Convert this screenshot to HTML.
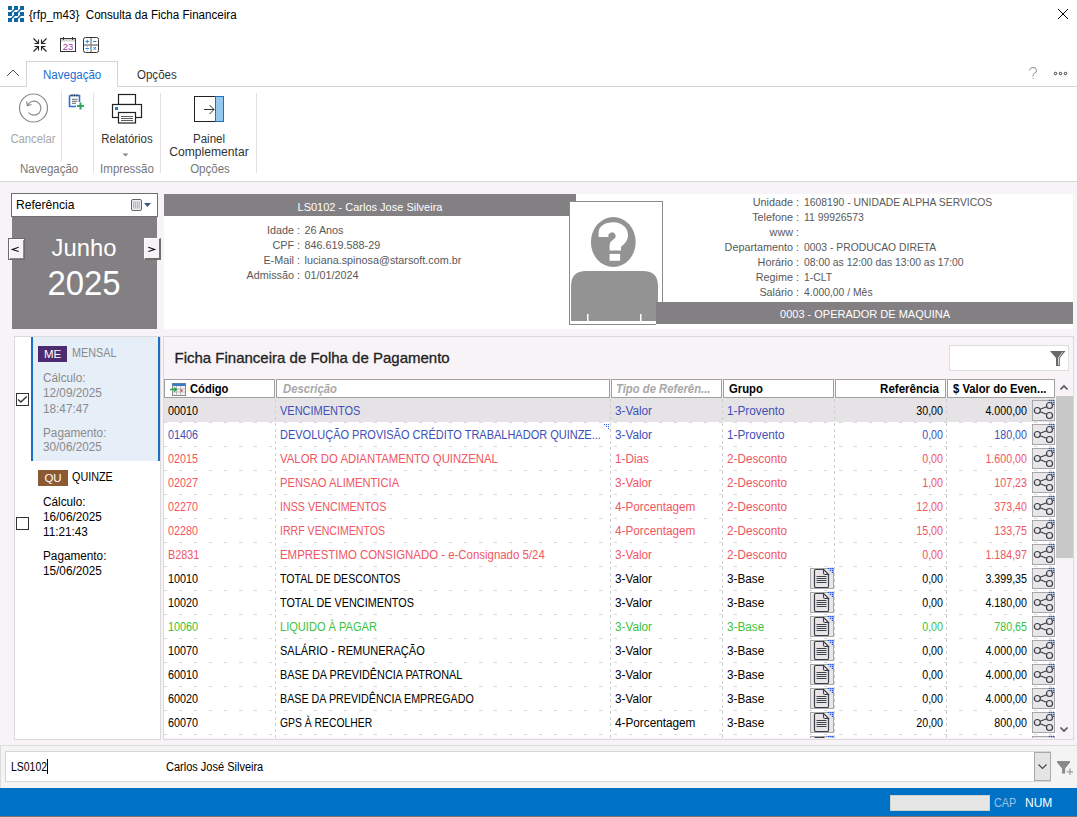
<!DOCTYPE html>
<html><head><meta charset="utf-8"><style>
html,body{margin:0;padding:0;width:1077px;height:817px;overflow:hidden;background:#f7f3f7;position:relative}
body div, body svg{position:absolute}
.t{font-family:"Liberation Sans", sans-serif;white-space:pre}
</style></head><body>
<div style="left:0px;top:0px;width:1077px;height:181px;background:#fff"></div>
<div style="left:0px;top:181px;width:1077px;height:1px;background:#d9d6d9"></div>
<svg style="left:8px;top:6px" width="16" height="16" viewBox="0 0 16 16"><g fill="#0d65a3"><rect x="0" y="0" width="4" height="4"/><rect x="6" y="0" width="4" height="4"/><rect x="12" y="0" width="4" height="4"/><rect x="0" y="6" width="4" height="4"/><rect x="6" y="6" width="4" height="4"/><rect x="12" y="6" width="4" height="4"/><rect x="0" y="12" width="4" height="4"/><rect x="6" y="12" width="4" height="4"/><rect x="12" y="12" width="4" height="4"/></g><path d="M3 7L7 3M9 7L13 3M3 13L7 9M9 13L13 9" stroke="#0d65a3" stroke-width="1.6"/></svg>
<div class="t" style="left:29px;top:6.5px;font-size:12.5px;line-height:16px;color:#000;transform:scaleX(0.928);transform-origin:0 0;">{rfp_m43}&nbsp; Consulta da Ficha Financeira</div>
<svg style="left:1057px;top:8px" width="12" height="12" viewBox="0 0 12 12"><path d="M1 1L11 11M11 1L1 11" stroke="#000" stroke-width="1"/></svg>
<svg style="left:32px;top:37px" width="16" height="16" viewBox="0 0 16 16" fill="none" stroke="#222" stroke-width="1.1"><path d="M1.5 1.5L6.5 6.5M6.5 2.5V6.5H2.5M14.5 1.5L9.5 6.5M9.5 2.5V6.5H13.5M1.5 14.5L6.5 9.5M6.5 13.5V9.5H2.5M14.5 14.5L9.5 9.5M9.5 13.5V9.5H13.5"/></svg>
<svg style="left:60px;top:37px" width="17" height="16" viewBox="0 0 17 16"><rect x="0.5" y="1.5" width="15" height="13" fill="#fff" stroke="#333"/><rect x="1" y="2" width="14" height="2.5" fill="#d4d4d4"/><path d="M3.5 0V3M12.5 0V3" stroke="#333"/><text x="8" y="12.7" font-family="Liberation Sans" font-size="9.5" fill="#a040a8" text-anchor="middle">23</text></svg>
<svg style="left:83px;top:37px" width="17" height="16" viewBox="0 0 17 16"><rect x="0.5" y="0.5" width="15" height="15" rx="2" fill="#fff" stroke="#333"/><path d="M8 1V15M1 8H15" stroke="#888" stroke-width="1.4"/><path d="M2.5 4.5H6M4.25 2.8V6.2M10 4.5H13.5M2.5 11.5H6M10.5 10L13 12.8M13 10L10.5 12.8" stroke="#1e88e5" stroke-width="1"/><circle cx="4.25" cy="9.7" r=".5" fill="#1e88e5"/><circle cx="4.25" cy="13.3" r=".5" fill="#1e88e5"/></svg>
<div style="left:0px;top:86px;width:26px;height:1px;background:#d4d4d4"></div>
<div style="left:118px;top:86px;width:959px;height:1px;background:#d4d4d4"></div>
<div style="left:26px;top:61px;width:92px;height:26px;border:1px solid #d4d4d4;border-bottom:none;background:#fff;box-sizing:border-box"></div>
<svg style="left:6px;top:68px" width="14" height="9" viewBox="0 0 14 9"><path d="M1 8L7 2L13 8" fill="none" stroke="#555" stroke-width="1"/></svg>
<div class="t" style="left:42.5px;top:67.25px;font-size:12px;line-height:16px;color:#1b6ccf;transform:scaleX(0.96);transform-origin:0 0;">Navegação</div>
<div class="t" style="left:136.5px;top:67.25px;font-size:12px;line-height:16px;color:#333;transform:scaleX(0.96);transform-origin:0 0;">Opções</div>
<svg style="left:1026px;top:64px" width="14" height="18" viewBox="0 0 14 18"><path d="M3.5 6.5 Q3.5 3.5 7 3.5 Q10.5 3.5 10.5 6.5 Q10.5 8.5 8 9.5 Q7 10 7 12.5" fill="none" stroke="#8e8e8e" stroke-width="1"/><rect x="6.5" y="13.8" width="1.2" height="1.2" fill="#aaa"/></svg>
<svg style="left:1053px;top:71px" width="15" height="5" viewBox="0 0 15 5" fill="none" stroke="#333" stroke-width="1"><circle cx="2.5" cy="2.5" r="1.2"/><circle cx="7.5" cy="2.5" r="1.2"/><circle cx="12.5" cy="2.5" r="1.2"/></svg>
<div style="left:61px;top:91px;width:1px;height:70px;background:#e2e0e2"></div>
<div style="left:93px;top:93px;width:1px;height:80px;background:#e2e0e2"></div>
<div style="left:160px;top:93px;width:1px;height:80px;background:#e2e0e2"></div>
<div style="left:256px;top:93px;width:1px;height:80px;background:#e2e0e2"></div>
<svg style="left:18px;top:93px" width="31" height="31" viewBox="0 0 31 31" fill="none" stroke="#8a8a8a" stroke-width="1.2"><circle cx="15.5" cy="15" r="14"/><path d="M9.5 12.5 A7 7 0 1 1 10.5 19.5"/><path d="M8.5 8.5 L9.5 12.8 L13.5 11.5"/></svg>
<div class="t" style="left:-267px;width:600px;text-align:center;top:131.0px;font-size:12px;line-height:16px;color:#a8a8a8;transform:scaleX(0.94);transform-origin:300px 0;">Cancelar</div>
<svg style="left:68px;top:93px" width="17" height="17" viewBox="0 0 17 17"><path d="M1.5 2.5H11.5V9M1.5 2.5V13.5H8" fill="none" stroke="#2f6fd0" stroke-width="1.6"/><path d="M4 1V3.5M6.5 1V3.5M9 1V3.5" stroke="#444" stroke-width="0.9"/><path d="M4 6.3H9.5M4 8.3H9.5M4 10.3H8" stroke="#555" stroke-width="0.9"/><path d="M12.5 9.5V16.5M9 13H16" stroke="#2ea860" stroke-width="2"/></svg>
<div class="t" style="left:19.5px;top:160.75px;font-size:12px;line-height:16px;color:#777;transform:scaleX(0.96);transform-origin:0 0;">Navegação</div>
<svg style="left:111px;top:93px" width="32" height="32" viewBox="0 0 32 32" fill="none" stroke="#222" stroke-width="1.2"><rect x="7.5" y="1.5" width="17" height="10" fill="#fff"/><rect x="1.5" y="11.5" width="29" height="13" fill="#fff"/><rect x="7.5" y="19.5" width="17" height="10.5" fill="#fff"/><path d="M10 23.5H22M10 25.5H22M10 27.5H22" stroke="#333" stroke-width="0.8"/><rect x="4" y="14" width="3" height="3" fill="#1e7bd6" stroke="none"/></svg>
<div class="t" style="left:-173px;width:600px;text-align:center;top:130.75px;font-size:12px;line-height:16px;color:#333;transform:scaleX(0.95);transform-origin:300px 0;">Relatórios</div>
<svg style="left:122px;top:153px" width="7" height="4" viewBox="0 0 7 4"><path d="M0.5 0.5H6.5L3.5 3.5Z" fill="#888"/></svg>
<div class="t" style="left:-173px;width:600px;text-align:center;top:160.75px;font-size:12px;line-height:16px;color:#777;transform:scaleX(0.96);transform-origin:300px 0;">Impressão</div>
<svg style="left:194px;top:96px" width="31" height="27" viewBox="0 0 31 27"><rect x="0.5" y="0.5" width="21" height="25" fill="#fff" stroke="#222"/><rect x="21.5" y="0.5" width="8" height="25" fill="#94c8ef" stroke="#1f6fc4"/><path d="M10 13.5H20M15.5 9L20 13.5L15.5 18" fill="none" stroke="#333" stroke-width="1"/></svg>
<div class="t" style="left:-91.5px;width:600px;text-align:center;top:130.75px;font-size:12px;line-height:16px;color:#333;transform:scaleX(0.96);transform-origin:300px 0;">Painel</div>
<div class="t" style="left:-90.80000000000001px;width:600px;text-align:center;top:144.25px;font-size:12px;line-height:16px;color:#333;transform:scaleX(1.01);transform-origin:300px 0;">Complementar</div>
<div class="t" style="left:-90.5px;width:600px;text-align:center;top:160.75px;font-size:12px;line-height:16px;color:#777;transform:scaleX(0.96);transform-origin:300px 0;">Opções</div>
<div style="left:11px;top:193px;width:147px;height:24px;background:#fff;border:1px solid #6e6e6e;box-sizing:border-box"></div>
<div class="t" style="left:16px;top:196.75px;font-size:12.1px;line-height:16px;color:#000;">Referência</div>
<svg style="left:131px;top:199px" width="21" height="12" viewBox="0 0 21 12"><rect x="0.5" y="0.5" width="10" height="11" rx="1.5" fill="#eef0f8" stroke="#6b6262"/><rect x="2" y="2.5" width="7" height="7" fill="#b8b8c0"/><rect x="3" y="3.5" width="1" height="1" fill="#fff"/><rect x="3" y="5.5" width="1" height="1" fill="#fff"/><rect x="3" y="7.5" width="1" height="1" fill="#fff"/><rect x="5" y="3.5" width="1" height="1" fill="#fff"/><rect x="5" y="5.5" width="1" height="1" fill="#fff"/><rect x="5" y="7.5" width="1" height="1" fill="#fff"/><rect x="7" y="3.5" width="1" height="1" fill="#fff"/><rect x="7" y="5.5" width="1" height="1" fill="#fff"/><rect x="7" y="7.5" width="1" height="1" fill="#fff"/><path d="M13 4H20L16.5 8Z" fill="#3a5580"/></svg>
<div style="left:12px;top:217px;width:145px;height:112px;background:#838083"></div>
<div class="t" style="left:-216px;width:600px;text-align:center;top:232.0px;font-size:23.8px;line-height:31px;color:#fff;">Junho</div>
<div class="t" style="left:-216px;width:600px;text-align:center;top:259.75px;font-size:35px;line-height:46px;color:#fff;transform:scaleX(0.94);transform-origin:300px 0;">2025</div>
<div style="left:8px;top:238px;width:17px;height:22px;background:#f6f2f6;border:1px solid #6a6a6a;box-shadow:inset 1px 1px 0 #fff, inset -1px -1px 0 #8a8a8a;box-sizing:border-box"></div>
<svg style="left:8px;top:238px" width="17" height="22" viewBox="0 0 17 22"><path d="M10.7 9.2L4.3 11.4L10.7 13.6" fill="none" stroke="#111" stroke-width="1.1"/></svg>
<div style="left:144px;top:238px;width:17px;height:22px;background:#f6f2f6;border-top:1px solid #fff;border-left:1px solid #fff;border-right:2px solid #6e6e6e;border-bottom:2px solid #6e6e6e;box-sizing:border-box"></div>
<svg style="left:144px;top:238px" width="17" height="22" viewBox="0 0 17 22"><path d="M4.3 9.2L10.7 11.4L4.3 13.6" fill="none" stroke="#111" stroke-width="1.1"/></svg>
<div style="left:164px;top:194px;width:909px;height:135px;background:#fff"></div>
<div style="left:164px;top:194px;width:412px;height:22px;background:#838083"></div>
<div class="t" style="left:70px;width:600px;text-align:center;top:199.5px;font-size:11.0px;line-height:14px;color:#fff;">LS0102 - Carlos Jose Silveira</div>
<div class="t" style="left:-100px;width:400px;text-align:right;top:222.75px;font-size:10.8px;line-height:14px;color:#585858;">Idade :</div>
<div class="t" style="left:304.5px;top:222.75px;font-size:10.8px;line-height:14px;color:#585858;">26 Anos</div>
<div class="t" style="left:-100px;width:400px;text-align:right;top:237.75px;font-size:10.8px;line-height:14px;color:#585858;">CPF :</div>
<div class="t" style="left:304.5px;top:237.75px;font-size:10.8px;line-height:14px;color:#585858;">846.619.588-29</div>
<div class="t" style="left:-100px;width:400px;text-align:right;top:252.75px;font-size:10.8px;line-height:14px;color:#585858;">E-Mail :</div>
<div class="t" style="left:304.5px;top:252.75px;font-size:10.8px;line-height:14px;color:#585858;">luciana.spinosa@starsoft.com.br</div>
<div class="t" style="left:-100px;width:400px;text-align:right;top:267.75px;font-size:10.8px;line-height:14px;color:#585858;">Admissão :</div>
<div class="t" style="left:304.5px;top:267.75px;font-size:10.8px;line-height:14px;color:#585858;">01/01/2024</div>
<div class="t" style="left:399px;width:400px;text-align:right;top:194.75px;font-size:10.8px;line-height:14px;color:#585858;">Unidade :</div>
<div class="t" style="left:803.5px;top:194.75px;font-size:10.8px;line-height:14px;color:#585858;transform:scaleX(0.96);transform-origin:0 0;">1608190 - UNIDADE ALPHA SERVICOS</div>
<div class="t" style="left:399px;width:400px;text-align:right;top:209.75px;font-size:10.8px;line-height:14px;color:#585858;">Telefone :</div>
<div class="t" style="left:803.5px;top:209.75px;font-size:10.8px;line-height:14px;color:#585858;transform:scaleX(0.96);transform-origin:0 0;">11 99926573</div>
<div class="t" style="left:399px;width:400px;text-align:right;top:224.75px;font-size:10.8px;line-height:14px;color:#585858;">www :</div>
<div class="t" style="left:803.5px;top:224.75px;font-size:10.8px;line-height:14px;color:#585858;transform:scaleX(0.96);transform-origin:0 0;"></div>
<div class="t" style="left:399px;width:400px;text-align:right;top:239.75px;font-size:10.8px;line-height:14px;color:#585858;">Departamento :</div>
<div class="t" style="left:803.5px;top:239.75px;font-size:10.8px;line-height:14px;color:#585858;transform:scaleX(0.96);transform-origin:0 0;">0003 - PRODUCAO DIRETA</div>
<div class="t" style="left:399px;width:400px;text-align:right;top:254.75px;font-size:10.8px;line-height:14px;color:#585858;">Horário :</div>
<div class="t" style="left:803.5px;top:254.75px;font-size:10.8px;line-height:14px;color:#585858;transform:scaleX(0.96);transform-origin:0 0;">08:00 as 12:00 das 13:00 as 17:00</div>
<div class="t" style="left:399px;width:400px;text-align:right;top:269.75px;font-size:10.8px;line-height:14px;color:#585858;">Regime :</div>
<div class="t" style="left:803.5px;top:269.75px;font-size:10.8px;line-height:14px;color:#585858;transform:scaleX(0.96);transform-origin:0 0;">1-CLT</div>
<div class="t" style="left:399px;width:400px;text-align:right;top:284.75px;font-size:10.8px;line-height:14px;color:#585858;">Salário :</div>
<div class="t" style="left:803.5px;top:284.75px;font-size:10.8px;line-height:14px;color:#585858;transform:scaleX(0.96);transform-origin:0 0;">4.000,00 / Mês</div>
<div style="left:656px;top:302px;width:417px;height:22px;background:#838083"></div>
<div class="t" style="left:565px;width:600px;text-align:center;top:306.75px;font-size:11.0px;line-height:14px;color:#fff;">0003 - OPERADOR DE MAQUINA</div>
<svg style="left:569px;top:201px" width="95" height="125" viewBox="0 0 95 125"><rect x="0.5" y="0.5" width="93" height="123" fill="#fff" stroke="#8a8a8a"/><ellipse cx="44.3" cy="41" rx="22.4" ry="25" fill="#939393"/><path d="M29.6 36 L29.6 32 C29.6 25 36 21.3 44.3 21.3 C53 21.3 59 27 59 34 C59 40 55 43 52 46 L52 49.5 L40.6 49.5 L40.6 44 C40.6 41 43 39.5 45 38 A3.6 3.6 0 1 0 39.5 36 Z" fill="#fff"/><rect x="40.6" y="52.9" width="10.5" height="6.9" fill="#fff"/><path d="M2 122 V85 Q2 70 17 70 H74 Q89 70 89 85 V122Z" fill="#939393"/><rect x="18" y="113" width="1.5" height="8" fill="#fff"/><rect x="71" y="113" width="1.5" height="8" fill="#fff"/><rect x="2" y="120" width="87" height="2" fill="#fff"/></svg>
<div style="left:656px;top:302px;width:417px;height:22px;background:#838083"></div>
<div style="left:656px;top:324px;width:8px;height:2px;background:#fff"></div>
<div class="t" style="left:565px;width:600px;text-align:center;top:306.75px;font-size:11.0px;line-height:14px;color:#fff;">0003 - OPERADOR DE MAQUINA</div>
<div style="left:14px;top:336px;width:147px;height:404px;background:#fff;border:1px solid #dcd9dc;box-sizing:border-box"></div>
<div style="left:31px;top:337px;width:129px;height:124px;background:#e6eef8;border-left:2px solid #1a6fc4;border-right:2px solid #1a6fc4;box-sizing:border-box"></div>
<div style="left:38px;top:346px;width:29px;height:16px;background:#4d2b70"></div>
<div class="t" style="left:-247.5px;width:600px;text-align:center;top:346.5px;font-size:11.5px;line-height:15px;color:#fff;">ME</div>
<div class="t" style="left:71.5px;top:345.0px;font-size:12.0px;line-height:16px;color:#8a8a8a;transform:scaleX(0.9);transform-origin:0 0;">MENSAL</div>
<div class="t" style="left:42.5px;top:370.25px;font-size:12.0px;line-height:16px;color:#8a8a8a;transform:scaleX(0.98);transform-origin:0 0;">Cálculo:</div>
<div class="t" style="left:42.5px;top:385.25px;font-size:12.0px;line-height:16px;color:#8a8a8a;transform:scaleX(0.98);transform-origin:0 0;">12/09/2025</div>
<div class="t" style="left:42.5px;top:401.0px;font-size:12.0px;line-height:16px;color:#8a8a8a;transform:scaleX(0.98);transform-origin:0 0;">18:47:47</div>
<div class="t" style="left:42.5px;top:424.5px;font-size:12.0px;line-height:16px;color:#8a8a8a;transform:scaleX(0.98);transform-origin:0 0;">Pagamento:</div>
<div class="t" style="left:42.5px;top:438.75px;font-size:12.0px;line-height:16px;color:#8a8a8a;transform:scaleX(0.98);transform-origin:0 0;">30/06/2025</div>
<div style="left:38px;top:470px;width:30px;height:16px;background:#8c5a32"></div>
<div class="t" style="left:-247px;width:600px;text-align:center;top:470.5px;font-size:11.5px;line-height:15px;color:#fff;">QU</div>
<div class="t" style="left:71.5px;top:468.75px;font-size:12.0px;line-height:16px;color:#000;transform:scaleX(0.9);transform-origin:0 0;">QUINZE</div>
<div class="t" style="left:42.5px;top:494.0px;font-size:12.0px;line-height:16px;color:#000;transform:scaleX(0.98);transform-origin:0 0;">Cálculo:</div>
<div class="t" style="left:42.5px;top:508.75px;font-size:12.0px;line-height:16px;color:#000;transform:scaleX(0.98);transform-origin:0 0;">16/06/2025</div>
<div class="t" style="left:42.5px;top:524.25px;font-size:12.0px;line-height:16px;color:#000;transform:scaleX(0.98);transform-origin:0 0;">11:21:43</div>
<div class="t" style="left:42.5px;top:548.25px;font-size:12.0px;line-height:16px;color:#000;transform:scaleX(0.98);transform-origin:0 0;">Pagamento:</div>
<div class="t" style="left:42.5px;top:563.0px;font-size:12.0px;line-height:16px;color:#000;transform:scaleX(0.98);transform-origin:0 0;">15/06/2025</div>
<div style="left:16px;top:393px;width:13px;height:13px;background:#fff;border:1px solid #333;box-sizing:border-box"></div>
<svg style="left:16px;top:393px" width="13" height="13" viewBox="0 0 13 13"><path d="M2.1 6.4L4.9 9.1L10.7 3.5" fill="none" stroke="#333" stroke-width="1.4"/></svg>
<div style="left:16px;top:517px;width:13px;height:13px;background:#fff;border:1px solid #333;box-sizing:border-box"></div>
<div style="left:163px;top:336px;width:911px;height:404px;background:#f7f3f7;border:1px solid #dcd9dc;box-sizing:border-box"></div>
<div class="t" style="left:174.5px;top:347.5px;font-size:15.0px;line-height:20px;color:#222;-webkit-text-stroke:0.3px #222">Ficha Financeira de Folha de Pagamento</div>
<div style="left:949px;top:345px;width:120px;height:26px;background:#fff;border:1px solid #dedede;box-sizing:border-box"></div>
<svg style="left:1050px;top:351px" width="16" height="16" viewBox="0 0 16 16"><path d="M0 0H15.5L9.9 7V15H6V7Z" fill="#676a67"/><path d="M12.6 1.3L8.6 6.6V14" fill="none" stroke="#fff" stroke-width="0.8"/></svg>
<div style="left:164px;top:398px;width:892px;height:340px;background:#fff"></div>
<div style="left:164px;top:379px;width:111px;height:19px;background:#fff;border:1px solid #a0a0a0;box-sizing:border-box"></div>
<div style="left:276px;top:379px;width:334px;height:19px;background:#fff;border:1px solid #a0a0a0;box-sizing:border-box"></div>
<div style="left:611px;top:379px;width:111px;height:19px;background:#fff;border:1px solid #a0a0a0;box-sizing:border-box"></div>
<div style="left:723px;top:379px;width:111px;height:19px;background:#fff;border:1px solid #a0a0a0;box-sizing:border-box"></div>
<div style="left:835px;top:379px;width:111px;height:19px;background:#fff;border:1px solid #a0a0a0;box-sizing:border-box"></div>
<div style="left:947px;top:379px;width:108px;height:19px;background:#fff;border:1px solid #a0a0a0;box-sizing:border-box"></div>
<svg style="left:170px;top:381px" width="17" height="15" viewBox="0 0 17 15"><rect x="2.5" y="2.5" width="13" height="12" fill="#f4f4f4" stroke="#8a8a8a"/><rect x="2.5" y="2.5" width="13" height="2.5" fill="#3a78c8"/><path d="M2.5 8H15.5M2.5 11H15.5M6.5 5V14.5M10.5 5V14.5" stroke="#b0b0b0" stroke-width="0.8"/><path d="M0 8.5H6M4 6.5L6.5 8.5L4 10.5" fill="none" stroke="#2aa050" stroke-width="1.3"/><rect x="10.5" y="8.5" width="2" height="2" fill="#e04040"/></svg>
<div class="t" style="left:189.5px;top:380.75px;font-size:12.0px;line-height:16px;color:#000;transform:scaleX(0.93);transform-origin:0 0;font-weight:bold">Código</div>
<div class="t" style="left:282.5px;top:380.75px;font-size:12.0px;line-height:16px;color:#a8a8a8;transform:scaleX(0.94);transform-origin:0 0;font-style:italic;font-weight:bold">Descrição</div>
<div class="t" style="left:615.5px;top:380.75px;font-size:12.0px;line-height:16px;color:#a8a8a8;transform:scaleX(0.94);transform-origin:0 0;font-style:italic;font-weight:bold">Tipo de Referên...</div>
<div class="t" style="left:729px;top:380.75px;font-size:12.0px;line-height:16px;color:#000;transform:scaleX(0.94);transform-origin:0 0;font-weight:bold">Grupo</div>
<div class="t" style="left:539px;width:400px;text-align:right;top:380.75px;font-size:12.0px;line-height:16px;color:#000;transform:scaleX(0.96);transform-origin:400px 0;font-weight:bold">Referência</div>
<div class="t" style="left:953px;top:380.75px;font-size:12.0px;line-height:16px;color:#000;transform:scaleX(0.94);transform-origin:0 0;font-weight:bold">$ Valor do Even...</div>
<div style="left:164px;top:398px;width:891px;height:340px;overflow:hidden">
<div style="left:0;top:0;width:891px;height:24px;background:#e6e3e6"></div>
<div style="left:0;top:24px;width:891px;height:1px;background:repeating-linear-gradient(90deg,#d6d6d6 0 3px,transparent 3px 15px)"></div>
<div class="t" style="left:4px;top:5.0px;font-size:12px;line-height:16px;color:#000;transform:scaleX(0.9);transform-origin:0 0;">00010</div>
<div class="t" style="left:116px;top:5.0px;font-size:12px;line-height:16px;color:#3e4fb8;transform:scaleX(0.915);transform-origin:0 0;">VENCIMENTOS</div>
<div class="t" style="left:451px;top:5.0px;font-size:12px;line-height:16px;color:#3e4fb8;transform:scaleX(0.98);transform-origin:0 0;">3-Valor</div>
<div class="t" style="left:563px;top:5.0px;font-size:12px;line-height:16px;color:#3e4fb8;transform:scaleX(0.98);transform-origin:0 0;">1-Provento</div>
<div class="t" style="left:379px;width:400px;text-align:right;top:5.0px;font-size:12px;line-height:16px;color:#000;transform:scaleX(0.89);transform-origin:400px 0;">30,00</div>
<svg style="left:868px;top:2px;overflow:visible" width="23" height="21" viewBox="0 0 23 21"><rect x="0.5" y="0.5" width="22" height="20" fill="#e8e6e8" stroke="#a8a8a8"/><g fill="none" stroke="#3c4048" stroke-width="1.2"><circle cx="5.3" cy="10.5" r="3"/><circle cx="17.5" cy="5.5" r="3"/><circle cx="17.5" cy="15.5" r="3"/><path d="M8.1 9.3L14.7 6.7M8.1 11.7L14.7 14.3"/></g><g fill="#2255ee"><rect x="16.8" y="-0.2" width="1.3" height="1.3"/><rect x="18.8" y="-0.2" width="1.3" height="1.3"/><rect x="20.8" y="-0.2" width="1.3" height="1.3"/><rect x="18.8" y="1.8" width="1.3" height="1.3"/><rect x="20.8" y="1.8" width="1.3" height="1.3"/><rect x="20.8" y="3.8" width="1.3" height="1.3"/></g></svg>
<div class="t" style="left:463px;width:400px;text-align:right;top:5.0px;font-size:12px;line-height:16px;color:#000;transform:scaleX(0.89);transform-origin:400px 0;">4.000,00</div>
<div style="left:0;top:48px;width:891px;height:1px;background:repeating-linear-gradient(90deg,#d6d6d6 0 3px,transparent 3px 15px)"></div>
<div class="t" style="left:4px;top:29.0px;font-size:12px;line-height:16px;color:#3e4fb8;transform:scaleX(0.9);transform-origin:0 0;">01406</div>
<div class="t" style="left:116px;top:29.0px;font-size:12px;line-height:16px;color:#3e4fb8;transform:scaleX(0.916);transform-origin:0 0;">DEVOLUÇÃO PROVISÃO CRÉDITO TRABALHADOR QUINZE...</div>
<div class="t" style="left:451px;top:29.0px;font-size:12px;line-height:16px;color:#3e4fb8;transform:scaleX(0.98);transform-origin:0 0;">3-Valor</div>
<div class="t" style="left:563px;top:29.0px;font-size:12px;line-height:16px;color:#3e4fb8;transform:scaleX(0.98);transform-origin:0 0;">1-Provento</div>
<div class="t" style="left:379px;width:400px;text-align:right;top:29.0px;font-size:12px;line-height:16px;color:#3e4fb8;transform:scaleX(0.89);transform-origin:400px 0;">0,00</div>
<svg style="left:868px;top:26px;overflow:visible" width="23" height="21" viewBox="0 0 23 21"><rect x="0.5" y="0.5" width="22" height="20" fill="#e8e6e8" stroke="#a8a8a8"/><g fill="none" stroke="#3c4048" stroke-width="1.2"><circle cx="5.3" cy="10.5" r="3"/><circle cx="17.5" cy="5.5" r="3"/><circle cx="17.5" cy="15.5" r="3"/><path d="M8.1 9.3L14.7 6.7M8.1 11.7L14.7 14.3"/></g><g fill="#2255ee"><rect x="16.8" y="-0.2" width="1.3" height="1.3"/><rect x="18.8" y="-0.2" width="1.3" height="1.3"/><rect x="20.8" y="-0.2" width="1.3" height="1.3"/><rect x="18.8" y="1.8" width="1.3" height="1.3"/><rect x="20.8" y="1.8" width="1.3" height="1.3"/><rect x="20.8" y="3.8" width="1.3" height="1.3"/></g></svg>
<div class="t" style="left:463px;width:400px;text-align:right;top:29.0px;font-size:12px;line-height:16px;color:#3e4fb8;transform:scaleX(0.89);transform-origin:400px 0;">180,00</div>
<div style="left:0;top:72px;width:891px;height:1px;background:repeating-linear-gradient(90deg,#d6d6d6 0 3px,transparent 3px 15px)"></div>
<div class="t" style="left:4px;top:53.0px;font-size:12px;line-height:16px;color:#f25563;transform:scaleX(0.9);transform-origin:0 0;">02015</div>
<div class="t" style="left:116px;top:53.0px;font-size:12px;line-height:16px;color:#f25563;transform:scaleX(0.947);transform-origin:0 0;">VALOR DO ADIANTAMENTO QUINZENAL</div>
<div class="t" style="left:451px;top:53.0px;font-size:12px;line-height:16px;color:#f25563;transform:scaleX(0.98);transform-origin:0 0;">1-Dias</div>
<div class="t" style="left:563px;top:53.0px;font-size:12px;line-height:16px;color:#f25563;transform:scaleX(0.98);transform-origin:0 0;">2-Desconto</div>
<div class="t" style="left:379px;width:400px;text-align:right;top:53.0px;font-size:12px;line-height:16px;color:#f25563;transform:scaleX(0.89);transform-origin:400px 0;">0,00</div>
<svg style="left:868px;top:50px;overflow:visible" width="23" height="21" viewBox="0 0 23 21"><rect x="0.5" y="0.5" width="22" height="20" fill="#e8e6e8" stroke="#a8a8a8"/><g fill="none" stroke="#3c4048" stroke-width="1.2"><circle cx="5.3" cy="10.5" r="3"/><circle cx="17.5" cy="5.5" r="3"/><circle cx="17.5" cy="15.5" r="3"/><path d="M8.1 9.3L14.7 6.7M8.1 11.7L14.7 14.3"/></g><g fill="#2255ee"><rect x="16.8" y="-0.2" width="1.3" height="1.3"/><rect x="18.8" y="-0.2" width="1.3" height="1.3"/><rect x="20.8" y="-0.2" width="1.3" height="1.3"/><rect x="18.8" y="1.8" width="1.3" height="1.3"/><rect x="20.8" y="1.8" width="1.3" height="1.3"/><rect x="20.8" y="3.8" width="1.3" height="1.3"/></g></svg>
<div class="t" style="left:463px;width:400px;text-align:right;top:53.0px;font-size:12px;line-height:16px;color:#f25563;transform:scaleX(0.89);transform-origin:400px 0;">1.600,00</div>
<div style="left:0;top:96px;width:891px;height:1px;background:repeating-linear-gradient(90deg,#d6d6d6 0 3px,transparent 3px 15px)"></div>
<div class="t" style="left:4px;top:77.0px;font-size:12px;line-height:16px;color:#f25563;transform:scaleX(0.9);transform-origin:0 0;">02027</div>
<div class="t" style="left:116px;top:77.0px;font-size:12px;line-height:16px;color:#f25563;transform:scaleX(0.93);transform-origin:0 0;">PENSAO ALIMENTICIA</div>
<div class="t" style="left:451px;top:77.0px;font-size:12px;line-height:16px;color:#f25563;transform:scaleX(0.98);transform-origin:0 0;">3-Valor</div>
<div class="t" style="left:563px;top:77.0px;font-size:12px;line-height:16px;color:#f25563;transform:scaleX(0.98);transform-origin:0 0;">2-Desconto</div>
<div class="t" style="left:379px;width:400px;text-align:right;top:77.0px;font-size:12px;line-height:16px;color:#f25563;transform:scaleX(0.89);transform-origin:400px 0;">1,00</div>
<svg style="left:868px;top:74px;overflow:visible" width="23" height="21" viewBox="0 0 23 21"><rect x="0.5" y="0.5" width="22" height="20" fill="#e8e6e8" stroke="#a8a8a8"/><g fill="none" stroke="#3c4048" stroke-width="1.2"><circle cx="5.3" cy="10.5" r="3"/><circle cx="17.5" cy="5.5" r="3"/><circle cx="17.5" cy="15.5" r="3"/><path d="M8.1 9.3L14.7 6.7M8.1 11.7L14.7 14.3"/></g><g fill="#2255ee"><rect x="16.8" y="-0.2" width="1.3" height="1.3"/><rect x="18.8" y="-0.2" width="1.3" height="1.3"/><rect x="20.8" y="-0.2" width="1.3" height="1.3"/><rect x="18.8" y="1.8" width="1.3" height="1.3"/><rect x="20.8" y="1.8" width="1.3" height="1.3"/><rect x="20.8" y="3.8" width="1.3" height="1.3"/></g></svg>
<div class="t" style="left:463px;width:400px;text-align:right;top:77.0px;font-size:12px;line-height:16px;color:#f25563;transform:scaleX(0.89);transform-origin:400px 0;">107,23</div>
<div style="left:0;top:120px;width:891px;height:1px;background:repeating-linear-gradient(90deg,#d6d6d6 0 3px,transparent 3px 15px)"></div>
<div class="t" style="left:4px;top:101.0px;font-size:12px;line-height:16px;color:#f25563;transform:scaleX(0.9);transform-origin:0 0;">02270</div>
<div class="t" style="left:116px;top:101.0px;font-size:12px;line-height:16px;color:#f25563;transform:scaleX(0.892);transform-origin:0 0;">INSS VENCIMENTOS</div>
<div class="t" style="left:451px;top:101.0px;font-size:12px;line-height:16px;color:#f25563;transform:scaleX(0.98);transform-origin:0 0;">4-Porcentagem</div>
<div class="t" style="left:563px;top:101.0px;font-size:12px;line-height:16px;color:#f25563;transform:scaleX(0.98);transform-origin:0 0;">2-Desconto</div>
<div class="t" style="left:379px;width:400px;text-align:right;top:101.0px;font-size:12px;line-height:16px;color:#f25563;transform:scaleX(0.89);transform-origin:400px 0;">12,00</div>
<svg style="left:868px;top:98px;overflow:visible" width="23" height="21" viewBox="0 0 23 21"><rect x="0.5" y="0.5" width="22" height="20" fill="#e8e6e8" stroke="#a8a8a8"/><g fill="none" stroke="#3c4048" stroke-width="1.2"><circle cx="5.3" cy="10.5" r="3"/><circle cx="17.5" cy="5.5" r="3"/><circle cx="17.5" cy="15.5" r="3"/><path d="M8.1 9.3L14.7 6.7M8.1 11.7L14.7 14.3"/></g><g fill="#2255ee"><rect x="16.8" y="-0.2" width="1.3" height="1.3"/><rect x="18.8" y="-0.2" width="1.3" height="1.3"/><rect x="20.8" y="-0.2" width="1.3" height="1.3"/><rect x="18.8" y="1.8" width="1.3" height="1.3"/><rect x="20.8" y="1.8" width="1.3" height="1.3"/><rect x="20.8" y="3.8" width="1.3" height="1.3"/></g></svg>
<div class="t" style="left:463px;width:400px;text-align:right;top:101.0px;font-size:12px;line-height:16px;color:#f25563;transform:scaleX(0.89);transform-origin:400px 0;">373,40</div>
<div style="left:0;top:144px;width:891px;height:1px;background:repeating-linear-gradient(90deg,#d6d6d6 0 3px,transparent 3px 15px)"></div>
<div class="t" style="left:4px;top:125.0px;font-size:12px;line-height:16px;color:#f25563;transform:scaleX(0.9);transform-origin:0 0;">02280</div>
<div class="t" style="left:116px;top:125.0px;font-size:12px;line-height:16px;color:#f25563;transform:scaleX(0.881);transform-origin:0 0;">IRRF VENCIMENTOS</div>
<div class="t" style="left:451px;top:125.0px;font-size:12px;line-height:16px;color:#f25563;transform:scaleX(0.98);transform-origin:0 0;">4-Porcentagem</div>
<div class="t" style="left:563px;top:125.0px;font-size:12px;line-height:16px;color:#f25563;transform:scaleX(0.98);transform-origin:0 0;">2-Desconto</div>
<div class="t" style="left:379px;width:400px;text-align:right;top:125.0px;font-size:12px;line-height:16px;color:#f25563;transform:scaleX(0.89);transform-origin:400px 0;">15,00</div>
<svg style="left:868px;top:122px;overflow:visible" width="23" height="21" viewBox="0 0 23 21"><rect x="0.5" y="0.5" width="22" height="20" fill="#e8e6e8" stroke="#a8a8a8"/><g fill="none" stroke="#3c4048" stroke-width="1.2"><circle cx="5.3" cy="10.5" r="3"/><circle cx="17.5" cy="5.5" r="3"/><circle cx="17.5" cy="15.5" r="3"/><path d="M8.1 9.3L14.7 6.7M8.1 11.7L14.7 14.3"/></g><g fill="#2255ee"><rect x="16.8" y="-0.2" width="1.3" height="1.3"/><rect x="18.8" y="-0.2" width="1.3" height="1.3"/><rect x="20.8" y="-0.2" width="1.3" height="1.3"/><rect x="18.8" y="1.8" width="1.3" height="1.3"/><rect x="20.8" y="1.8" width="1.3" height="1.3"/><rect x="20.8" y="3.8" width="1.3" height="1.3"/></g></svg>
<div class="t" style="left:463px;width:400px;text-align:right;top:125.0px;font-size:12px;line-height:16px;color:#f25563;transform:scaleX(0.89);transform-origin:400px 0;">133,75</div>
<div style="left:0;top:168px;width:891px;height:1px;background:repeating-linear-gradient(90deg,#d6d6d6 0 3px,transparent 3px 15px)"></div>
<div class="t" style="left:4px;top:149.0px;font-size:12px;line-height:16px;color:#f25563;transform:scaleX(0.9);transform-origin:0 0;">B2831</div>
<div class="t" style="left:116px;top:149.0px;font-size:12px;line-height:16px;color:#f25563;transform:scaleX(0.952);transform-origin:0 0;">EMPRESTIMO CONSIGNADO - e-Consignado 5/24</div>
<div class="t" style="left:451px;top:149.0px;font-size:12px;line-height:16px;color:#f25563;transform:scaleX(0.98);transform-origin:0 0;">3-Valor</div>
<div class="t" style="left:563px;top:149.0px;font-size:12px;line-height:16px;color:#f25563;transform:scaleX(0.98);transform-origin:0 0;">2-Desconto</div>
<div class="t" style="left:379px;width:400px;text-align:right;top:149.0px;font-size:12px;line-height:16px;color:#f25563;transform:scaleX(0.89);transform-origin:400px 0;">0,00</div>
<svg style="left:868px;top:146px;overflow:visible" width="23" height="21" viewBox="0 0 23 21"><rect x="0.5" y="0.5" width="22" height="20" fill="#e8e6e8" stroke="#a8a8a8"/><g fill="none" stroke="#3c4048" stroke-width="1.2"><circle cx="5.3" cy="10.5" r="3"/><circle cx="17.5" cy="5.5" r="3"/><circle cx="17.5" cy="15.5" r="3"/><path d="M8.1 9.3L14.7 6.7M8.1 11.7L14.7 14.3"/></g><g fill="#2255ee"><rect x="16.8" y="-0.2" width="1.3" height="1.3"/><rect x="18.8" y="-0.2" width="1.3" height="1.3"/><rect x="20.8" y="-0.2" width="1.3" height="1.3"/><rect x="18.8" y="1.8" width="1.3" height="1.3"/><rect x="20.8" y="1.8" width="1.3" height="1.3"/><rect x="20.8" y="3.8" width="1.3" height="1.3"/></g></svg>
<div class="t" style="left:463px;width:400px;text-align:right;top:149.0px;font-size:12px;line-height:16px;color:#f25563;transform:scaleX(0.89);transform-origin:400px 0;">1.184,97</div>
<div style="left:0;top:192px;width:891px;height:1px;background:repeating-linear-gradient(90deg,#d6d6d6 0 3px,transparent 3px 15px)"></div>
<div class="t" style="left:4px;top:173.0px;font-size:12px;line-height:16px;color:#000;transform:scaleX(0.9);transform-origin:0 0;">10010</div>
<div class="t" style="left:116px;top:173.0px;font-size:12px;line-height:16px;color:#000;transform:scaleX(0.884);transform-origin:0 0;">TOTAL DE DESCONTOS</div>
<div class="t" style="left:451px;top:173.0px;font-size:12px;line-height:16px;color:#000;transform:scaleX(0.98);transform-origin:0 0;">3-Valor</div>
<div class="t" style="left:563px;top:173.0px;font-size:12px;line-height:16px;color:#000;transform:scaleX(0.98);transform-origin:0 0;">3-Base</div>
<div class="t" style="left:379px;width:400px;text-align:right;top:173.0px;font-size:12px;line-height:16px;color:#000;transform:scaleX(0.89);transform-origin:400px 0;">0,00</div>
<svg style="left:646px;top:170px;overflow:visible" width="25" height="22" viewBox="0 0 25 22"><rect x="0.5" y="0.5" width="23" height="20" fill="#e8e6e8" stroke="#a8a8a8"/><path d="M5.8 1.5H13.5L18.5 6.5V18.2Q18.5 19.5 17.2 19.5H5.8Q4.5 19.5 4.5 18.2V2.8Q4.5 1.5 5.8 1.5Z" fill="none" stroke="#3c4048" stroke-width="1.2"/><path d="M13.5 1.5V5Q13.5 6.5 15 6.5H18.5Z" fill="#fff" stroke="#3c4048" stroke-width="1.1"/><path d="M6.5 8.5H16.5M6.5 10.5H16.5M6.5 12.5H16.5M6.5 14.5H16.5" stroke="#3c4048" stroke-width="1"/><g fill="#2255ee"><rect x="17.8" y="-0.2" width="1.3" height="1.3"/><rect x="19.8" y="-0.2" width="1.3" height="1.3"/><rect x="21.8" y="-0.2" width="1.3" height="1.3"/><rect x="19.8" y="1.8" width="1.3" height="1.3"/><rect x="21.8" y="1.8" width="1.3" height="1.3"/><rect x="21.8" y="3.8" width="1.3" height="1.3"/></g></svg>
<svg style="left:868px;top:170px;overflow:visible" width="23" height="21" viewBox="0 0 23 21"><rect x="0.5" y="0.5" width="22" height="20" fill="#e8e6e8" stroke="#a8a8a8"/><g fill="none" stroke="#3c4048" stroke-width="1.2"><circle cx="5.3" cy="10.5" r="3"/><circle cx="17.5" cy="5.5" r="3"/><circle cx="17.5" cy="15.5" r="3"/><path d="M8.1 9.3L14.7 6.7M8.1 11.7L14.7 14.3"/></g><g fill="#2255ee"><rect x="16.8" y="-0.2" width="1.3" height="1.3"/><rect x="18.8" y="-0.2" width="1.3" height="1.3"/><rect x="20.8" y="-0.2" width="1.3" height="1.3"/><rect x="18.8" y="1.8" width="1.3" height="1.3"/><rect x="20.8" y="1.8" width="1.3" height="1.3"/><rect x="20.8" y="3.8" width="1.3" height="1.3"/></g></svg>
<div class="t" style="left:463px;width:400px;text-align:right;top:173.0px;font-size:12px;line-height:16px;color:#000;transform:scaleX(0.89);transform-origin:400px 0;">3.399,35</div>
<div style="left:0;top:216px;width:891px;height:1px;background:repeating-linear-gradient(90deg,#d6d6d6 0 3px,transparent 3px 15px)"></div>
<div class="t" style="left:4px;top:197.0px;font-size:12px;line-height:16px;color:#000;transform:scaleX(0.9);transform-origin:0 0;">10020</div>
<div class="t" style="left:116px;top:197.0px;font-size:12px;line-height:16px;color:#000;transform:scaleX(0.903);transform-origin:0 0;">TOTAL DE VENCIMENTOS</div>
<div class="t" style="left:451px;top:197.0px;font-size:12px;line-height:16px;color:#000;transform:scaleX(0.98);transform-origin:0 0;">3-Valor</div>
<div class="t" style="left:563px;top:197.0px;font-size:12px;line-height:16px;color:#000;transform:scaleX(0.98);transform-origin:0 0;">3-Base</div>
<div class="t" style="left:379px;width:400px;text-align:right;top:197.0px;font-size:12px;line-height:16px;color:#000;transform:scaleX(0.89);transform-origin:400px 0;">0,00</div>
<svg style="left:646px;top:194px;overflow:visible" width="25" height="22" viewBox="0 0 25 22"><rect x="0.5" y="0.5" width="23" height="20" fill="#e8e6e8" stroke="#a8a8a8"/><path d="M5.8 1.5H13.5L18.5 6.5V18.2Q18.5 19.5 17.2 19.5H5.8Q4.5 19.5 4.5 18.2V2.8Q4.5 1.5 5.8 1.5Z" fill="none" stroke="#3c4048" stroke-width="1.2"/><path d="M13.5 1.5V5Q13.5 6.5 15 6.5H18.5Z" fill="#fff" stroke="#3c4048" stroke-width="1.1"/><path d="M6.5 8.5H16.5M6.5 10.5H16.5M6.5 12.5H16.5M6.5 14.5H16.5" stroke="#3c4048" stroke-width="1"/><g fill="#2255ee"><rect x="17.8" y="-0.2" width="1.3" height="1.3"/><rect x="19.8" y="-0.2" width="1.3" height="1.3"/><rect x="21.8" y="-0.2" width="1.3" height="1.3"/><rect x="19.8" y="1.8" width="1.3" height="1.3"/><rect x="21.8" y="1.8" width="1.3" height="1.3"/><rect x="21.8" y="3.8" width="1.3" height="1.3"/></g></svg>
<svg style="left:868px;top:194px;overflow:visible" width="23" height="21" viewBox="0 0 23 21"><rect x="0.5" y="0.5" width="22" height="20" fill="#e8e6e8" stroke="#a8a8a8"/><g fill="none" stroke="#3c4048" stroke-width="1.2"><circle cx="5.3" cy="10.5" r="3"/><circle cx="17.5" cy="5.5" r="3"/><circle cx="17.5" cy="15.5" r="3"/><path d="M8.1 9.3L14.7 6.7M8.1 11.7L14.7 14.3"/></g><g fill="#2255ee"><rect x="16.8" y="-0.2" width="1.3" height="1.3"/><rect x="18.8" y="-0.2" width="1.3" height="1.3"/><rect x="20.8" y="-0.2" width="1.3" height="1.3"/><rect x="18.8" y="1.8" width="1.3" height="1.3"/><rect x="20.8" y="1.8" width="1.3" height="1.3"/><rect x="20.8" y="3.8" width="1.3" height="1.3"/></g></svg>
<div class="t" style="left:463px;width:400px;text-align:right;top:197.0px;font-size:12px;line-height:16px;color:#000;transform:scaleX(0.89);transform-origin:400px 0;">4.180,00</div>
<div style="left:0;top:240px;width:891px;height:1px;background:repeating-linear-gradient(90deg,#d6d6d6 0 3px,transparent 3px 15px)"></div>
<div class="t" style="left:4px;top:221.0px;font-size:12px;line-height:16px;color:#3cc23c;transform:scaleX(0.9);transform-origin:0 0;">10060</div>
<div class="t" style="left:116px;top:221.0px;font-size:12px;line-height:16px;color:#3cc23c;transform:scaleX(0.922);transform-origin:0 0;">LIQUIDO À PAGAR</div>
<div class="t" style="left:451px;top:221.0px;font-size:12px;line-height:16px;color:#3cc23c;transform:scaleX(0.98);transform-origin:0 0;">3-Valor</div>
<div class="t" style="left:563px;top:221.0px;font-size:12px;line-height:16px;color:#3cc23c;transform:scaleX(0.98);transform-origin:0 0;">3-Base</div>
<div class="t" style="left:379px;width:400px;text-align:right;top:221.0px;font-size:12px;line-height:16px;color:#3cc23c;transform:scaleX(0.89);transform-origin:400px 0;">0,00</div>
<svg style="left:646px;top:218px;overflow:visible" width="25" height="22" viewBox="0 0 25 22"><rect x="0.5" y="0.5" width="23" height="20" fill="#e8e6e8" stroke="#a8a8a8"/><path d="M5.8 1.5H13.5L18.5 6.5V18.2Q18.5 19.5 17.2 19.5H5.8Q4.5 19.5 4.5 18.2V2.8Q4.5 1.5 5.8 1.5Z" fill="none" stroke="#3c4048" stroke-width="1.2"/><path d="M13.5 1.5V5Q13.5 6.5 15 6.5H18.5Z" fill="#fff" stroke="#3c4048" stroke-width="1.1"/><path d="M6.5 8.5H16.5M6.5 10.5H16.5M6.5 12.5H16.5M6.5 14.5H16.5" stroke="#3c4048" stroke-width="1"/><g fill="#2255ee"><rect x="17.8" y="-0.2" width="1.3" height="1.3"/><rect x="19.8" y="-0.2" width="1.3" height="1.3"/><rect x="21.8" y="-0.2" width="1.3" height="1.3"/><rect x="19.8" y="1.8" width="1.3" height="1.3"/><rect x="21.8" y="1.8" width="1.3" height="1.3"/><rect x="21.8" y="3.8" width="1.3" height="1.3"/></g></svg>
<svg style="left:868px;top:218px;overflow:visible" width="23" height="21" viewBox="0 0 23 21"><rect x="0.5" y="0.5" width="22" height="20" fill="#e8e6e8" stroke="#a8a8a8"/><g fill="none" stroke="#3c4048" stroke-width="1.2"><circle cx="5.3" cy="10.5" r="3"/><circle cx="17.5" cy="5.5" r="3"/><circle cx="17.5" cy="15.5" r="3"/><path d="M8.1 9.3L14.7 6.7M8.1 11.7L14.7 14.3"/></g><g fill="#2255ee"><rect x="16.8" y="-0.2" width="1.3" height="1.3"/><rect x="18.8" y="-0.2" width="1.3" height="1.3"/><rect x="20.8" y="-0.2" width="1.3" height="1.3"/><rect x="18.8" y="1.8" width="1.3" height="1.3"/><rect x="20.8" y="1.8" width="1.3" height="1.3"/><rect x="20.8" y="3.8" width="1.3" height="1.3"/></g></svg>
<div class="t" style="left:463px;width:400px;text-align:right;top:221.0px;font-size:12px;line-height:16px;color:#3cc23c;transform:scaleX(0.89);transform-origin:400px 0;">780,65</div>
<div style="left:0;top:264px;width:891px;height:1px;background:repeating-linear-gradient(90deg,#d6d6d6 0 3px,transparent 3px 15px)"></div>
<div class="t" style="left:4px;top:245.0px;font-size:12px;line-height:16px;color:#000;transform:scaleX(0.9);transform-origin:0 0;">10070</div>
<div class="t" style="left:116px;top:245.0px;font-size:12px;line-height:16px;color:#000;transform:scaleX(0.92);transform-origin:0 0;">SALÁRIO - REMUNERAÇÃO</div>
<div class="t" style="left:451px;top:245.0px;font-size:12px;line-height:16px;color:#000;transform:scaleX(0.98);transform-origin:0 0;">3-Valor</div>
<div class="t" style="left:563px;top:245.0px;font-size:12px;line-height:16px;color:#000;transform:scaleX(0.98);transform-origin:0 0;">3-Base</div>
<div class="t" style="left:379px;width:400px;text-align:right;top:245.0px;font-size:12px;line-height:16px;color:#000;transform:scaleX(0.89);transform-origin:400px 0;">0,00</div>
<svg style="left:646px;top:242px;overflow:visible" width="25" height="22" viewBox="0 0 25 22"><rect x="0.5" y="0.5" width="23" height="20" fill="#e8e6e8" stroke="#a8a8a8"/><path d="M5.8 1.5H13.5L18.5 6.5V18.2Q18.5 19.5 17.2 19.5H5.8Q4.5 19.5 4.5 18.2V2.8Q4.5 1.5 5.8 1.5Z" fill="none" stroke="#3c4048" stroke-width="1.2"/><path d="M13.5 1.5V5Q13.5 6.5 15 6.5H18.5Z" fill="#fff" stroke="#3c4048" stroke-width="1.1"/><path d="M6.5 8.5H16.5M6.5 10.5H16.5M6.5 12.5H16.5M6.5 14.5H16.5" stroke="#3c4048" stroke-width="1"/><g fill="#2255ee"><rect x="17.8" y="-0.2" width="1.3" height="1.3"/><rect x="19.8" y="-0.2" width="1.3" height="1.3"/><rect x="21.8" y="-0.2" width="1.3" height="1.3"/><rect x="19.8" y="1.8" width="1.3" height="1.3"/><rect x="21.8" y="1.8" width="1.3" height="1.3"/><rect x="21.8" y="3.8" width="1.3" height="1.3"/></g></svg>
<svg style="left:868px;top:242px;overflow:visible" width="23" height="21" viewBox="0 0 23 21"><rect x="0.5" y="0.5" width="22" height="20" fill="#e8e6e8" stroke="#a8a8a8"/><g fill="none" stroke="#3c4048" stroke-width="1.2"><circle cx="5.3" cy="10.5" r="3"/><circle cx="17.5" cy="5.5" r="3"/><circle cx="17.5" cy="15.5" r="3"/><path d="M8.1 9.3L14.7 6.7M8.1 11.7L14.7 14.3"/></g><g fill="#2255ee"><rect x="16.8" y="-0.2" width="1.3" height="1.3"/><rect x="18.8" y="-0.2" width="1.3" height="1.3"/><rect x="20.8" y="-0.2" width="1.3" height="1.3"/><rect x="18.8" y="1.8" width="1.3" height="1.3"/><rect x="20.8" y="1.8" width="1.3" height="1.3"/><rect x="20.8" y="3.8" width="1.3" height="1.3"/></g></svg>
<div class="t" style="left:463px;width:400px;text-align:right;top:245.0px;font-size:12px;line-height:16px;color:#000;transform:scaleX(0.89);transform-origin:400px 0;">4.000,00</div>
<div style="left:0;top:288px;width:891px;height:1px;background:repeating-linear-gradient(90deg,#d6d6d6 0 3px,transparent 3px 15px)"></div>
<div class="t" style="left:4px;top:269.0px;font-size:12px;line-height:16px;color:#000;transform:scaleX(0.9);transform-origin:0 0;">60010</div>
<div class="t" style="left:116px;top:269.0px;font-size:12px;line-height:16px;color:#000;transform:scaleX(0.904);transform-origin:0 0;">BASE DA PREVIDÊNCIA PATRONAL</div>
<div class="t" style="left:451px;top:269.0px;font-size:12px;line-height:16px;color:#000;transform:scaleX(0.98);transform-origin:0 0;">3-Valor</div>
<div class="t" style="left:563px;top:269.0px;font-size:12px;line-height:16px;color:#000;transform:scaleX(0.98);transform-origin:0 0;">3-Base</div>
<div class="t" style="left:379px;width:400px;text-align:right;top:269.0px;font-size:12px;line-height:16px;color:#000;transform:scaleX(0.89);transform-origin:400px 0;">0,00</div>
<svg style="left:646px;top:266px;overflow:visible" width="25" height="22" viewBox="0 0 25 22"><rect x="0.5" y="0.5" width="23" height="20" fill="#e8e6e8" stroke="#a8a8a8"/><path d="M5.8 1.5H13.5L18.5 6.5V18.2Q18.5 19.5 17.2 19.5H5.8Q4.5 19.5 4.5 18.2V2.8Q4.5 1.5 5.8 1.5Z" fill="none" stroke="#3c4048" stroke-width="1.2"/><path d="M13.5 1.5V5Q13.5 6.5 15 6.5H18.5Z" fill="#fff" stroke="#3c4048" stroke-width="1.1"/><path d="M6.5 8.5H16.5M6.5 10.5H16.5M6.5 12.5H16.5M6.5 14.5H16.5" stroke="#3c4048" stroke-width="1"/><g fill="#2255ee"><rect x="17.8" y="-0.2" width="1.3" height="1.3"/><rect x="19.8" y="-0.2" width="1.3" height="1.3"/><rect x="21.8" y="-0.2" width="1.3" height="1.3"/><rect x="19.8" y="1.8" width="1.3" height="1.3"/><rect x="21.8" y="1.8" width="1.3" height="1.3"/><rect x="21.8" y="3.8" width="1.3" height="1.3"/></g></svg>
<svg style="left:868px;top:266px;overflow:visible" width="23" height="21" viewBox="0 0 23 21"><rect x="0.5" y="0.5" width="22" height="20" fill="#e8e6e8" stroke="#a8a8a8"/><g fill="none" stroke="#3c4048" stroke-width="1.2"><circle cx="5.3" cy="10.5" r="3"/><circle cx="17.5" cy="5.5" r="3"/><circle cx="17.5" cy="15.5" r="3"/><path d="M8.1 9.3L14.7 6.7M8.1 11.7L14.7 14.3"/></g><g fill="#2255ee"><rect x="16.8" y="-0.2" width="1.3" height="1.3"/><rect x="18.8" y="-0.2" width="1.3" height="1.3"/><rect x="20.8" y="-0.2" width="1.3" height="1.3"/><rect x="18.8" y="1.8" width="1.3" height="1.3"/><rect x="20.8" y="1.8" width="1.3" height="1.3"/><rect x="20.8" y="3.8" width="1.3" height="1.3"/></g></svg>
<div class="t" style="left:463px;width:400px;text-align:right;top:269.0px;font-size:12px;line-height:16px;color:#000;transform:scaleX(0.89);transform-origin:400px 0;">4.000,00</div>
<div style="left:0;top:312px;width:891px;height:1px;background:repeating-linear-gradient(90deg,#d6d6d6 0 3px,transparent 3px 15px)"></div>
<div class="t" style="left:4px;top:293.0px;font-size:12px;line-height:16px;color:#000;transform:scaleX(0.9);transform-origin:0 0;">60020</div>
<div class="t" style="left:116px;top:293.0px;font-size:12px;line-height:16px;color:#000;transform:scaleX(0.894);transform-origin:0 0;">BASE DA PREVIDÊNCIA EMPREGADO</div>
<div class="t" style="left:451px;top:293.0px;font-size:12px;line-height:16px;color:#000;transform:scaleX(0.98);transform-origin:0 0;">3-Valor</div>
<div class="t" style="left:563px;top:293.0px;font-size:12px;line-height:16px;color:#000;transform:scaleX(0.98);transform-origin:0 0;">3-Base</div>
<div class="t" style="left:379px;width:400px;text-align:right;top:293.0px;font-size:12px;line-height:16px;color:#000;transform:scaleX(0.89);transform-origin:400px 0;">0,00</div>
<svg style="left:646px;top:290px;overflow:visible" width="25" height="22" viewBox="0 0 25 22"><rect x="0.5" y="0.5" width="23" height="20" fill="#e8e6e8" stroke="#a8a8a8"/><path d="M5.8 1.5H13.5L18.5 6.5V18.2Q18.5 19.5 17.2 19.5H5.8Q4.5 19.5 4.5 18.2V2.8Q4.5 1.5 5.8 1.5Z" fill="none" stroke="#3c4048" stroke-width="1.2"/><path d="M13.5 1.5V5Q13.5 6.5 15 6.5H18.5Z" fill="#fff" stroke="#3c4048" stroke-width="1.1"/><path d="M6.5 8.5H16.5M6.5 10.5H16.5M6.5 12.5H16.5M6.5 14.5H16.5" stroke="#3c4048" stroke-width="1"/><g fill="#2255ee"><rect x="17.8" y="-0.2" width="1.3" height="1.3"/><rect x="19.8" y="-0.2" width="1.3" height="1.3"/><rect x="21.8" y="-0.2" width="1.3" height="1.3"/><rect x="19.8" y="1.8" width="1.3" height="1.3"/><rect x="21.8" y="1.8" width="1.3" height="1.3"/><rect x="21.8" y="3.8" width="1.3" height="1.3"/></g></svg>
<svg style="left:868px;top:290px;overflow:visible" width="23" height="21" viewBox="0 0 23 21"><rect x="0.5" y="0.5" width="22" height="20" fill="#e8e6e8" stroke="#a8a8a8"/><g fill="none" stroke="#3c4048" stroke-width="1.2"><circle cx="5.3" cy="10.5" r="3"/><circle cx="17.5" cy="5.5" r="3"/><circle cx="17.5" cy="15.5" r="3"/><path d="M8.1 9.3L14.7 6.7M8.1 11.7L14.7 14.3"/></g><g fill="#2255ee"><rect x="16.8" y="-0.2" width="1.3" height="1.3"/><rect x="18.8" y="-0.2" width="1.3" height="1.3"/><rect x="20.8" y="-0.2" width="1.3" height="1.3"/><rect x="18.8" y="1.8" width="1.3" height="1.3"/><rect x="20.8" y="1.8" width="1.3" height="1.3"/><rect x="20.8" y="3.8" width="1.3" height="1.3"/></g></svg>
<div class="t" style="left:463px;width:400px;text-align:right;top:293.0px;font-size:12px;line-height:16px;color:#000;transform:scaleX(0.89);transform-origin:400px 0;">4.000,00</div>
<div style="left:0;top:336px;width:891px;height:1px;background:repeating-linear-gradient(90deg,#d6d6d6 0 3px,transparent 3px 15px)"></div>
<div class="t" style="left:4px;top:317.0px;font-size:12px;line-height:16px;color:#000;transform:scaleX(0.9);transform-origin:0 0;">60070</div>
<div class="t" style="left:116px;top:317.0px;font-size:12px;line-height:16px;color:#000;transform:scaleX(0.864);transform-origin:0 0;">GPS À RECOLHER</div>
<div class="t" style="left:451px;top:317.0px;font-size:12px;line-height:16px;color:#000;transform:scaleX(0.98);transform-origin:0 0;">4-Porcentagem</div>
<div class="t" style="left:563px;top:317.0px;font-size:12px;line-height:16px;color:#000;transform:scaleX(0.98);transform-origin:0 0;">3-Base</div>
<div class="t" style="left:379px;width:400px;text-align:right;top:317.0px;font-size:12px;line-height:16px;color:#000;transform:scaleX(0.89);transform-origin:400px 0;">20,00</div>
<svg style="left:646px;top:314px;overflow:visible" width="25" height="22" viewBox="0 0 25 22"><rect x="0.5" y="0.5" width="23" height="20" fill="#e8e6e8" stroke="#a8a8a8"/><path d="M5.8 1.5H13.5L18.5 6.5V18.2Q18.5 19.5 17.2 19.5H5.8Q4.5 19.5 4.5 18.2V2.8Q4.5 1.5 5.8 1.5Z" fill="none" stroke="#3c4048" stroke-width="1.2"/><path d="M13.5 1.5V5Q13.5 6.5 15 6.5H18.5Z" fill="#fff" stroke="#3c4048" stroke-width="1.1"/><path d="M6.5 8.5H16.5M6.5 10.5H16.5M6.5 12.5H16.5M6.5 14.5H16.5" stroke="#3c4048" stroke-width="1"/><g fill="#2255ee"><rect x="17.8" y="-0.2" width="1.3" height="1.3"/><rect x="19.8" y="-0.2" width="1.3" height="1.3"/><rect x="21.8" y="-0.2" width="1.3" height="1.3"/><rect x="19.8" y="1.8" width="1.3" height="1.3"/><rect x="21.8" y="1.8" width="1.3" height="1.3"/><rect x="21.8" y="3.8" width="1.3" height="1.3"/></g></svg>
<svg style="left:868px;top:314px;overflow:visible" width="23" height="21" viewBox="0 0 23 21"><rect x="0.5" y="0.5" width="22" height="20" fill="#e8e6e8" stroke="#a8a8a8"/><g fill="none" stroke="#3c4048" stroke-width="1.2"><circle cx="5.3" cy="10.5" r="3"/><circle cx="17.5" cy="5.5" r="3"/><circle cx="17.5" cy="15.5" r="3"/><path d="M8.1 9.3L14.7 6.7M8.1 11.7L14.7 14.3"/></g><g fill="#2255ee"><rect x="16.8" y="-0.2" width="1.3" height="1.3"/><rect x="18.8" y="-0.2" width="1.3" height="1.3"/><rect x="20.8" y="-0.2" width="1.3" height="1.3"/><rect x="18.8" y="1.8" width="1.3" height="1.3"/><rect x="20.8" y="1.8" width="1.3" height="1.3"/><rect x="20.8" y="3.8" width="1.3" height="1.3"/></g></svg>
<div class="t" style="left:463px;width:400px;text-align:right;top:317.0px;font-size:12px;line-height:16px;color:#000;transform:scaleX(0.89);transform-origin:400px 0;">800,00</div>
<div style="left:0;top:360px;width:891px;height:1px;background:repeating-linear-gradient(90deg,#d6d6d6 0 3px,transparent 3px 15px)"></div>
<svg style="left:646px;top:338px;overflow:visible" width="25" height="22" viewBox="0 0 25 22"><rect x="0.5" y="0.5" width="23" height="20" fill="#e8e6e8" stroke="#a8a8a8"/><path d="M5.8 1.5H13.5L18.5 6.5V18.2Q18.5 19.5 17.2 19.5H5.8Q4.5 19.5 4.5 18.2V2.8Q4.5 1.5 5.8 1.5Z" fill="none" stroke="#3c4048" stroke-width="1.2"/><path d="M13.5 1.5V5Q13.5 6.5 15 6.5H18.5Z" fill="#fff" stroke="#3c4048" stroke-width="1.1"/><path d="M6.5 8.5H16.5M6.5 10.5H16.5M6.5 12.5H16.5M6.5 14.5H16.5" stroke="#3c4048" stroke-width="1"/><g fill="#2255ee"><rect x="17.8" y="-0.2" width="1.3" height="1.3"/><rect x="19.8" y="-0.2" width="1.3" height="1.3"/><rect x="21.8" y="-0.2" width="1.3" height="1.3"/><rect x="19.8" y="1.8" width="1.3" height="1.3"/><rect x="21.8" y="1.8" width="1.3" height="1.3"/><rect x="21.8" y="3.8" width="1.3" height="1.3"/></g></svg>
<svg style="left:868px;top:338px;overflow:visible" width="23" height="21" viewBox="0 0 23 21"><rect x="0.5" y="0.5" width="22" height="20" fill="#e8e6e8" stroke="#a8a8a8"/><g fill="none" stroke="#3c4048" stroke-width="1.2"><circle cx="5.3" cy="10.5" r="3"/><circle cx="17.5" cy="5.5" r="3"/><circle cx="17.5" cy="15.5" r="3"/><path d="M8.1 9.3L14.7 6.7M8.1 11.7L14.7 14.3"/></g><g fill="#2255ee"><rect x="16.8" y="-0.2" width="1.3" height="1.3"/><rect x="18.8" y="-0.2" width="1.3" height="1.3"/><rect x="20.8" y="-0.2" width="1.3" height="1.3"/><rect x="18.8" y="1.8" width="1.3" height="1.3"/><rect x="20.8" y="1.8" width="1.3" height="1.3"/><rect x="20.8" y="3.8" width="1.3" height="1.3"/></g></svg>
</div>
<div style="left:275px;top:398px;width:1px;height:340px;background:repeating-linear-gradient(180deg,transparent 0 1px,#d0d0d0 1px 4px,transparent 4px 6px)"></div>
<div style="left:610px;top:398px;width:1px;height:340px;background:repeating-linear-gradient(180deg,transparent 0 1px,#d0d0d0 1px 4px,transparent 4px 6px)"></div>
<div style="left:722px;top:398px;width:1px;height:340px;background:repeating-linear-gradient(180deg,transparent 0 1px,#d0d0d0 1px 4px,transparent 4px 6px)"></div>
<div style="left:834px;top:398px;width:1px;height:340px;background:repeating-linear-gradient(180deg,transparent 0 1px,#d0d0d0 1px 4px,transparent 4px 6px)"></div>
<div style="left:946px;top:398px;width:1px;height:340px;background:repeating-linear-gradient(180deg,transparent 0 1px,#d0d0d0 1px 4px,transparent 4px 6px)"></div>
<svg style="left:604px;top:424px" width="5" height="5" viewBox="0 0 5 5"><g fill="#2a5cf0"><rect x="0" y="0" width="1" height="1"/><rect x="2" y="0" width="1" height="1"/><rect x="4" y="0" width="1" height="1"/><rect x="2" y="2" width="1" height="1"/><rect x="4" y="2" width="1" height="1"/><rect x="4" y="4" width="1" height="1"/></g></svg>
<div style="left:1056px;top:379px;width:17px;height:359px;background:#f7f3f7"></div>
<svg style="left:1059px;top:384px" width="10" height="7" viewBox="0 0 10 7"><path d="M1.5 5.5L5 2L8.5 5.5" fill="none" stroke="#555" stroke-width="1.7"/></svg>
<div style="left:1056px;top:396px;width:17px;height:162px;background:#c8c8c8"></div>
<svg style="left:1059px;top:726px" width="10" height="7" viewBox="0 0 10 7"><path d="M1.5 1.5L5 5L8.5 1.5" fill="none" stroke="#555" stroke-width="1.7"/></svg>
<div style="left:0px;top:745px;width:1077px;height:43px;background:#f4f4f4;border-top:1px solid #dcdcdc;border-left:1px solid #dcdcdc;box-sizing:border-box"></div>
<div style="left:5px;top:751px;width:1046px;height:31px;background:#fff;border:1px solid #d6d6d6;box-sizing:border-box"></div>
<div class="t" style="left:10.5px;top:759.25px;font-size:12.0px;line-height:16px;color:#000;transform:scaleX(0.87);transform-origin:0 0;">LS0102</div>
<div style="left:46.5px;top:759px;width:1px;height:15px;background:#000"></div>
<div class="t" style="left:166px;top:759.25px;font-size:12.0px;line-height:16px;color:#000;transform:scaleX(0.917);transform-origin:0 0;">Carlos José Silveira</div>
<div style="left:1034px;top:752px;width:17px;height:29px;background:#e6e3e6;border:1px solid #aaa;box-sizing:border-box"></div>
<svg style="left:1037px;top:763px" width="11" height="7" viewBox="0 0 11 7"><path d="M1.5 1.5L5.5 5.5L9.5 1.5" fill="none" stroke="#444" stroke-width="1.1"/></svg>
<svg style="left:1056px;top:760px" width="20" height="17" viewBox="0 0 20 17"><path d="M1 1H14V2.5L9.1 8.5V13.6H6.1V8.5L1 2.5Z" fill="#8a8a8a"/><path d="M14 8.6V14.8M10.9 11.8H17.1" stroke="#aaa" stroke-width="1.6"/></svg>
<div style="left:0px;top:788px;width:1077px;height:28px;background:#0072c6"></div>
<div style="left:0px;top:816px;width:1077px;height:1px;background:#7a7470"></div>
<div style="left:890px;top:795px;width:100px;height:16px;background:#e6e6e6;border:1px solid #d0d0d0;box-sizing:border-box"></div>
<div class="t" style="left:993.5px;top:794.75px;font-size:12px;line-height:16px;color:#9ec3e8;transform:scaleX(0.9);transform-origin:0 0;">CAP</div>
<div class="t" style="left:1025px;top:794.75px;font-size:12px;line-height:16px;color:#fff;">NUM</div>
</body></html>
